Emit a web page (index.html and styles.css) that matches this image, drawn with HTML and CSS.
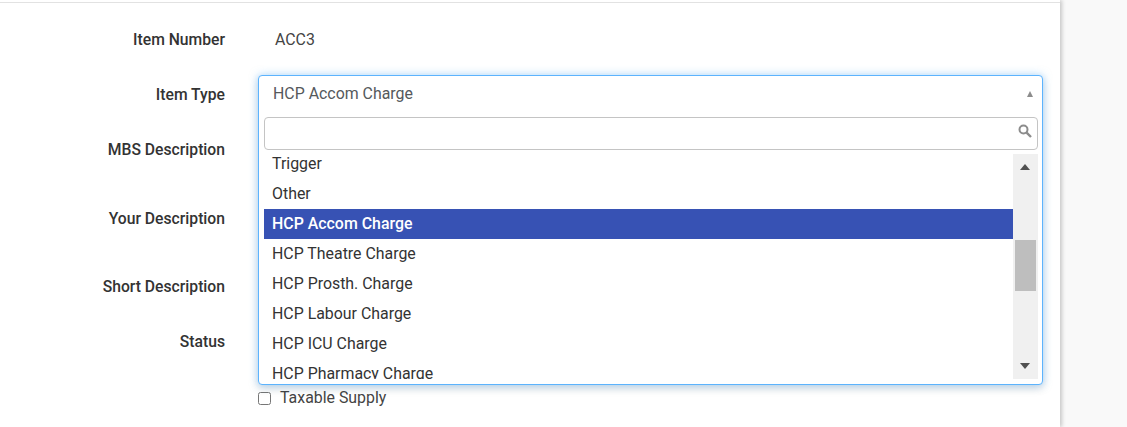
FILE: index.html
```html
<!DOCTYPE html>
<html>
	<head>
		<meta charset="utf-8">
		<title>Item</title>
		<link rel="stylesheet" href="styles.css">
	</head>
	<body>
		<div class="panel">
			<form class="item-form">
				<div class="form-row row-number">
					<label class="form-label">Item Number</label>
					<div class="form-value">ACC3</div>
				</div>

				<div class="form-row row-type">
					<label class="form-label">Item Type</label>
					<div class="select-field">
						<!-- open dropdown sits over the rows below -->
						<div class="select-open">
							<div class="select-current">
								<span>HCP Accom Charge</span>
								<span class="select-arrow"></span>
							</div>
							<div class="select-search">
								<input type="text" class="search-input">
								<svg class="search-icon" width="14" height="14" viewBox="0 0 14 14">
									<circle cx="5.5" cy="5.5" r="4" fill="none" stroke="#8c8c8c" stroke-width="2"/>
									<path d="M8.6 8.6 L13 13" stroke="#8c8c8c" stroke-width="2.4"/>
								</svg>
							</div>
							<div class="select-body">
								<ul class="option-list">
									<li>Trigger</li>
									<li>Other</li>
									<li class="selected">HCP Accom Charge</li>
									<li>HCP Theatre Charge</li>
									<li>HCP Prosth. Charge</li>
									<li>HCP Labour Charge</li>
									<li>HCP ICU Charge</li>
									<li>HCP Pharmacy Charge</li>
								</ul>
								<div class="scrollbar">
									<span class="scroll-up"></span>
									<span class="scroll-thumb"></span>
									<span class="scroll-down"></span>
								</div>
							</div>
						</div>
					</div>
				</div>

				<div class="form-row row-mbs">
					<label class="form-label">MBS Description</label>
				</div>
				<div class="form-row row-your">
					<label class="form-label">Your Description</label>
				</div>
				<div class="form-row row-short">
					<label class="form-label">Short Description</label>
				</div>
				<div class="form-row row-status">
					<label class="form-label">Status</label>
				</div>
				<div class="form-row">
					<span></span>
					<label class="check-label"><input type="checkbox" class="check-box"> Taxable Supply</label>
				</div>
			</form>
		</div>
	</body>
</html>
```

FILE: styles.css
```css
html, body {
    margin: 0;
    height: 100%;
    overflow: hidden;
}

body {
    background: #f9f9f9;
    font-family: Roboto, "Liberation Sans", sans-serif;
    font-size: 15.9px;
    color: #333333;
}

.panel {
    width: 1060px;
    height: 427px;
    box-sizing: border-box;
    background: #ffffff;
    box-shadow: 2px 0 4px rgba(0, 0, 0, 0.2);
    padding-top: 2px;
}

.item-form {
    border-top: 1px solid #e2e2e2;
    padding-top: 26px;
}

.form-row {
    display: grid;
    grid-template-columns: 225px 785px;
    column-gap: 33px;
    line-height: 22px;
}

.row-number { height: 55px; }
.row-type { height: 55px; }
.row-mbs { height: 69px; }
.row-your { height: 68px; }
.row-short { height: 55px; }
.row-status { height: 56px; }

.form-label {
    font-weight: 500;
    text-align: right;
    font-size: 15.7px;
}

.form-value {
    padding-left: 17px;
    color: #444444;
}

.select-field {
    position: relative;
}

.select-open {
    position: absolute;
    left: 0;
    top: -9px;
    width: 785px;
    height: 310px;
    box-sizing: border-box;
    background: #ffffff;
    border: 1px solid #5cb3fd;
    border-radius: 4px;
    box-shadow: 0 0 8px rgba(92, 179, 253, 0.5), 0 4px 8px rgba(0, 0, 0, 0.12);
    padding: 0 4px 0 5px;
    z-index: 10;
}

.select-current {
    display: flex;
    justify-content: space-between;
    align-items: center;
    height: 35px;
    padding: 0 5px 0 9px;
    color: #55595c;
}

.select-arrow {
    width: 0;
    height: 0;
    border-left: 3.5px solid transparent;
    border-right: 3.5px solid transparent;
    border-bottom: 6px solid #8c8c8c;
}

.select-search {
    position: relative;
    margin-top: 6px;
    height: 33px;
}

.search-input {
    display: block;
    width: 100%;
    height: 33px;
    box-sizing: border-box;
    border: 1px solid #c4c4c4;
    border-radius: 4px;
    outline: none;
}

.search-icon {
    position: absolute;
    right: 6px;
    top: 7px;
}

.select-body {
    display: flex;
    height: 225px;
    margin-top: 4px;
}

.option-list {
    flex: 1;
    list-style: none;
    margin: 0;
    padding: 0;
    overflow: hidden;
}

.option-list li {
    height: 30px;
    line-height: 30px;
    padding: 0 8px;
    color: #333333;
}

/* list is scrolled a little, first option is cut at the top */
.option-list li:first-child {
    margin-top: -5px;
}

.option-list .selected {
    background: #3752b4;
    color: #ffffff;
    font-weight: 500;
}

.scrollbar {
    position: relative;
    width: 25px;
    background: #f0f0f0;
}

.scroll-up, .scroll-down {
    position: absolute;
    left: 7px;
    width: 0;
    height: 0;
    border-left: 5.5px solid transparent;
    border-right: 5.5px solid transparent;
}

.scroll-up {
    top: 10px;
    border-bottom: 6px solid #505050;
}

.scroll-down {
    bottom: 10px;
    border-top: 6px solid #505050;
}

.scroll-thumb {
    position: absolute;
    left: 2px;
    top: 86px;
    width: 21px;
    height: 51px;
    background: #bebebe;
}

.check-label {
    display: flex;
    align-items: center;
    color: #444444;
}

.check-box {
    width: 13px;
    height: 13px;
    margin: 0 9px 0 0;
}
```
